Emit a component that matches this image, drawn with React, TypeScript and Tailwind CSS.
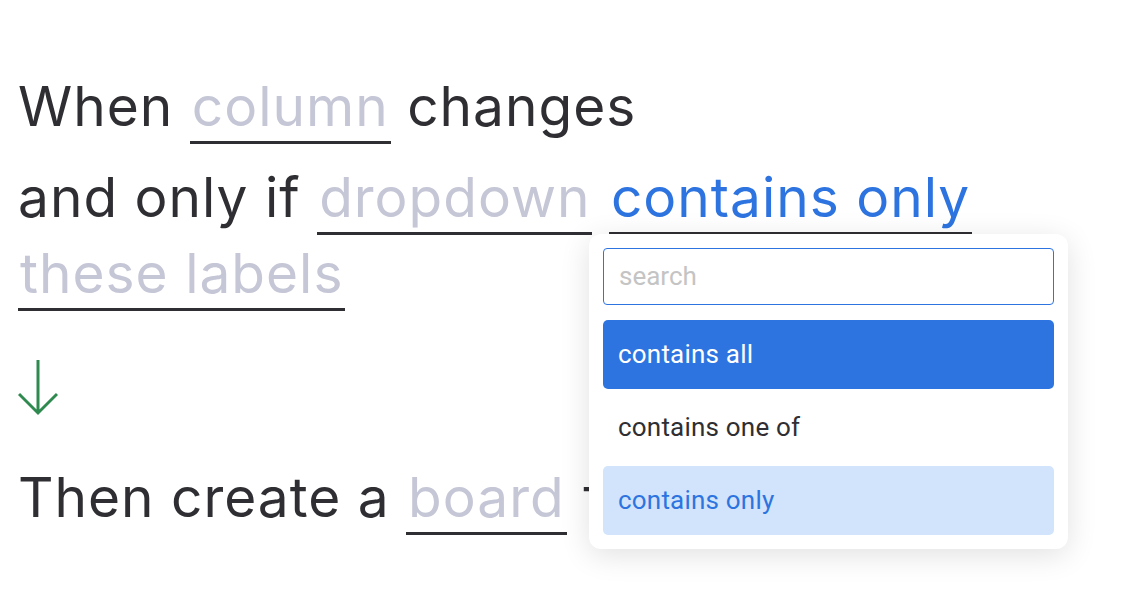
import React from "react";

function Blank({ children, tone = "muted" }: { children: React.ReactNode; tone?: "muted" | "blue" }) {
  return (
    <span
      className={
        "inline-block border-b-[3px] border-[#2f2f33] px-[2px] leading-[70px] " +
        (tone === "blue" ? "text-[#2d74e0]" : "text-[#c5c6d6]")
      }
    >
      {children}
    </span>
  );
}

function DownArrow() {
  return (
    <svg width="40" height="56" viewBox="0 0 40 56" fill="none" className="block">
      <path d="M20 0V53M1 34L20 53L39 34" stroke="#2e8a4e" strokeWidth="3" />
    </svg>
  );
}

const options = [
  { label: "contains all", state: "active" },
  { label: "contains one of", state: "idle" },
  { label: "contains only", state: "selected" },
];

export default function App() {
  return (
    <div className="relative w-[1144px] h-[590px] overflow-hidden bg-white text-[#2f2f33] font-['Inter',sans-serif]">
      <div className="pl-[18px] pt-[68px] text-[55px] tracking-[1px]">
        <div className="leading-[76px]">
          When <Blank>column</Blank> changes
        </div>
        <div className="mt-[15px] leading-[76px] max-w-[1000px]">
          and only if <Blank>dropdown</Blank> <Blank tone="blue">contains only</Blank>{" "}
          <Blank>these labels</Blank>
        </div>
        <div className="mt-[49px] mb-[43px]">
          <DownArrow />
        </div>
        <div className="leading-[76px]">
          Then create a <Blank>board</Blank> from
        </div>
      </div>

      {/* dropdown menu */}
      <div className="absolute left-[589px] top-[234px] w-[479px] rounded-[12px] bg-white p-[14px] shadow-[0_6px_30px_rgba(0,0,0,0.12)] font-['Roboto',sans-serif]">
        <div className="flex h-[57px] items-center rounded-[4px] border border-[#2d74e0] px-[15px] text-[26px] text-[#c4c4c4]">
          search
        </div>
        <div className="mt-[15px] flex flex-col gap-[4px]">
          {options.map((o) => (
            <div
              key={o.label}
              className={
                "flex h-[69px] items-center rounded-[5px] px-[15px] text-[26px] tracking-[0.2px] " +
                (o.state === "active"
                  ? "bg-[#2d74e0] text-white"
                  : o.state === "selected"
                  ? "bg-[#d2e4fb] text-[#2d74e0]"
                  : "text-[#2f2f33]")
              }
            >
              {o.label}
            </div>
          ))}
        </div>
      </div>
    </div>
  );
}
